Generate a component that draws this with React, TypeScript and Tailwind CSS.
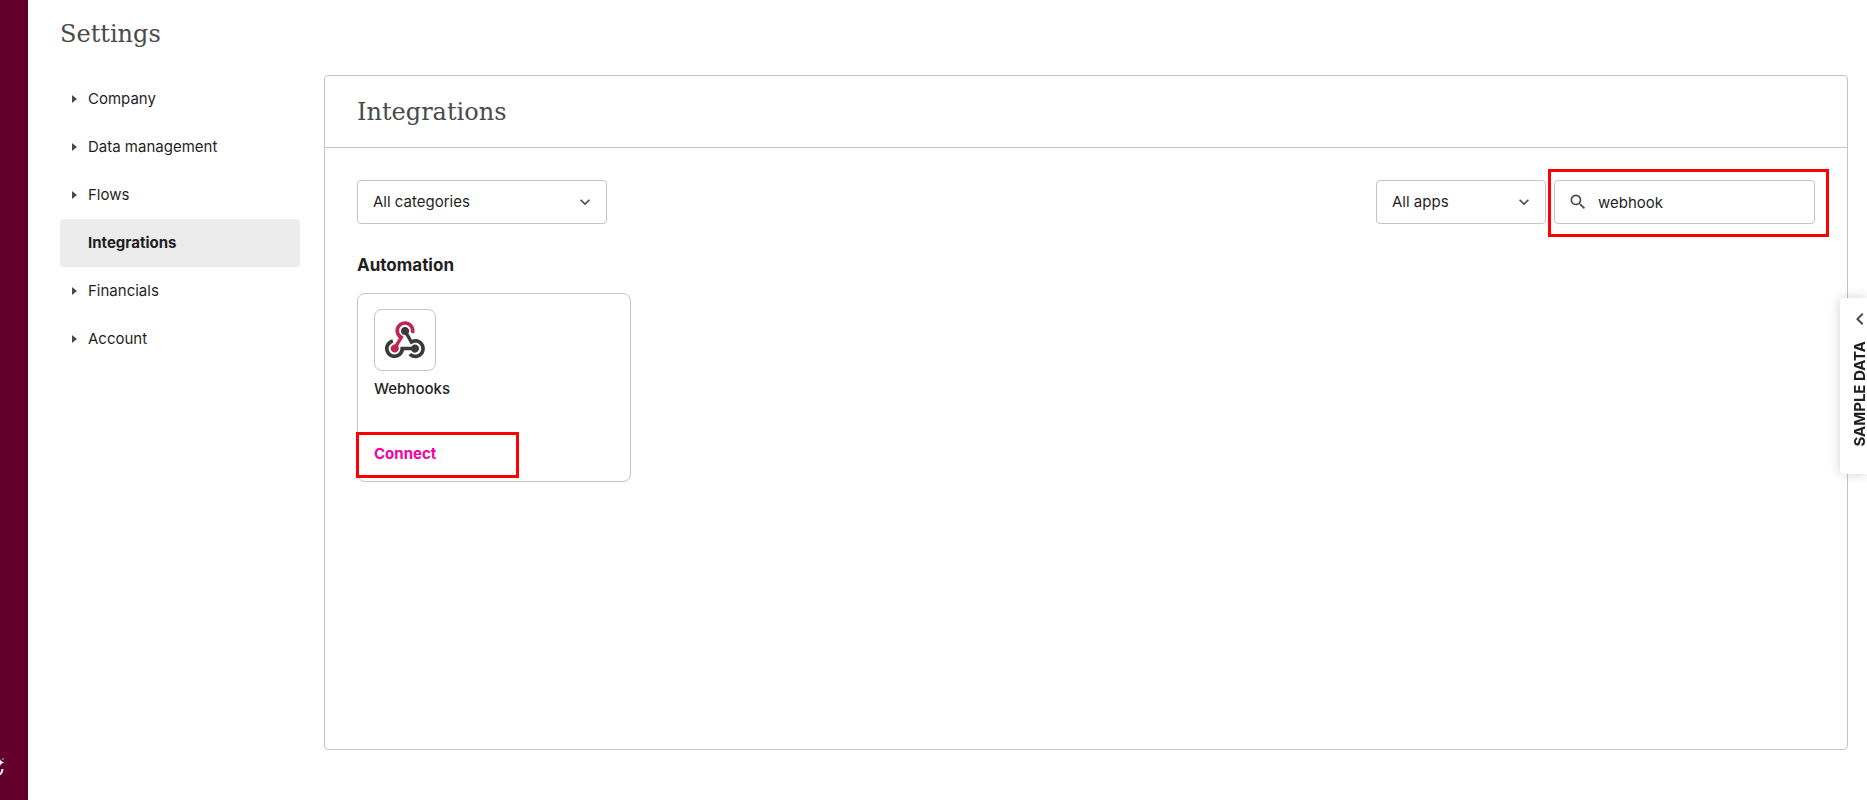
import { MdKeyboardArrowDown, MdKeyboardArrowLeft, MdSearch } from "react-icons/md";

type NavItem = {
  label: string;
  active?: boolean;
};

const navItems: NavItem[] = [
  { label: "Company" },
  { label: "Data management" },
  { label: "Flows" },
  { label: "Integrations", active: true },
  { label: "Financials" },
  { label: "Account" }
];

const headingClass = "font-['DejaVu_Serif',serif] text-2xl leading-8 text-[#4a4a4a]";
const fieldClass =
  "h-11 w-full appearance-none rounded border border-[#c4c4c4] bg-white text-[15px] text-[#1f1f1f] outline-none";

function WebhooksLogo() {
  return (
    <svg viewBox="0 0 256 239" className="w-10" aria-hidden="true">
      <path
        fill="#bd2853"
        d="M119.54 100.503c-10.61 17.836-20.775 35.108-31.152 52.25-2.665 4.401-3.984 7.986-1.855 13.58 5.878 15.454-2.414 30.493-17.998 34.575-14.697 3.851-29.016-5.808-31.932-21.543-2.584-13.927 8.224-27.58 23.58-29.757 1.286-.184 2.6-.205 4.762-.367l23.358-39.168C73.612 95.465 64.868 78.39 66.803 57.23c1.368-14.957 7.25-27.883 18-38.477 20.59-20.288 52.002-23.573 76.246-8.001 23.284 14.958 33.948 44.094 24.858 69.031-6.854-1.858-13.756-3.732-21.343-5.79 2.854-13.865.743-26.315-8.608-36.981-6.178-7.042-14.106-10.733-23.12-12.093-18.072-2.73-35.815 8.88-41.08 26.618-5.976 20.13 3.069 36.575 27.784 48.967z"
      />
      <path
        fill="#3a3a3a"
        d="M149.841 79.41c7.475 13.187 15.065 26.573 22.587 39.836 38.02-11.763 66.686 9.284 76.97 31.817 12.422 27.219 3.93 59.457-20.465 76.25-25.04 17.238-56.707 14.293-78.892-7.851 5.654-4.733 11.336-9.487 17.407-14.566 21.912 14.192 41.077 13.524 55.305-3.282 12.133-14.337 11.87-35.714-.615-49.75-14.408-16.197-33.707-16.691-57.035-1.143-9.677-17.168-19.522-34.199-28.893-51.491-3.16-5.828-6.648-9.21-13.77-10.443-11.893-2.062-19.571-12.275-20.032-23.717-.453-11.316 6.214-21.545 16.634-25.53 10.322-3.949 22.435-.762 29.378 8.014 5.674 7.17 7.477 15.24 4.491 24.083-.83 2.466-1.905 4.852-3.07 7.774z"
      />
      <path
        fill="#3a3a3a"
        d="M167.707 187.21h-45.77c-4.387 18.044-13.863 32.612-30.19 41.876-12.693 7.2-26.373 9.641-40.933 7.29-26.808-4.323-48.728-28.456-50.658-55.63-2.184-30.784 18.975-58.147 47.178-64.293 1.947 7.071 3.915 14.21 5.862 21.264-25.876 13.202-34.832 29.836-27.59 50.636 6.375 18.304 24.484 28.337 44.147 24.457 20.08-3.962 30.204-20.65 28.968-47.432 19.036 0 38.088-.197 57.126.097 7.434.117 13.173-.654 18.773-7.208 9.22-10.784 26.191-9.811 36.121.374 10.148 10.409 9.662 27.157-1.077 37.127-10.361 9.62-26.73 9.106-36.424-1.26-1.992-2.136-3.562-4.673-5.533-7.298z"
      />
    </svg>
  );
}

function SelectField({ label, option }: { label: string; option: string }) {
  return (
    <div className="relative">
      <select aria-label={label} className={`${fieldClass} pr-10 pl-[15px]`}>
        <option>{option}</option>
      </select>
      <MdKeyboardArrowDown className="pointer-events-none absolute right-3 top-3 size-5 text-[#4a4a4a]" />
    </div>
  );
}

function SettingsNav() {
  return (
    <nav aria-label="Settings" className="w-60 shrink-0 text-[15px] text-[#1f1f1f]">
      {navItems.map((item) => (
        <a
          key={item.label}
          href="#"
          aria-current={item.active ? "page" : undefined}
          className={`flex h-12 items-center rounded pl-3 ${item.active ? "bg-[#ececec] font-bold" : ""}`}
        >
          <span className="flex w-4 shrink-0">
            {!item.active && (
              <svg viewBox="0 0 5 8" className="h-2 w-[5px]" fill="#4a4a4a" aria-hidden="true">
                <path d="M0 0l5 4-5 4z" />
              </svg>
            )}
          </span>
          {item.label}
        </a>
      ))}
    </nav>
  );
}

function IntegrationCard() {
  return (
    <article className="relative mt-4 flex h-[189px] w-[274px] flex-col items-start rounded-lg border border-[#c4c4c4] px-4 pt-[15px]">
      <div className="flex size-[62px] items-center justify-center rounded-lg border border-[#c4c4c4]">
        <WebhooksLogo />
      </div>
      <h3 className="mt-2 text-[15px] leading-5 font-medium text-[#1f1f1f]">Webhooks</h3>
      <button type="button" className="mt-[45px] text-[15px] leading-5 font-bold text-[#f500a3]">
        Connect
      </button>
      <div className="pointer-events-none absolute top-[138px] -left-0.5 h-[46px] w-[163px] border-3 border-[#ff0000]" />
    </article>
  );
}

export default function App() {
  return (
    <div className="flex min-h-screen bg-white font-[Inter,sans-serif]">
      <aside className="flex w-7 shrink-0 flex-col justify-end bg-[#62002b] pb-6">
        <svg viewBox="0 0 4 18" className="h-[18px] w-1" aria-hidden="true">
          <path d="M0 1l1 2 3 1.500-3 1.500-1 2z" fill="#fff" />
          <path d="M2 1h2" stroke="#fff" strokeOpacity=".7" />
          <path d="M2.500 11c0 2-1 4-2.500 5.500" fill="none" stroke="#fff" strokeWidth="2" />
        </svg>
      </aside>

      <div className="flex min-w-0 flex-1 flex-col pt-[18px] pr-[19px] pb-[50px] pl-8">
        <h1 className={headingClass}>Settings</h1>
        <div className="mt-[25px] flex flex-1 gap-6">
          <SettingsNav />
          <main className="min-w-0 flex-1 rounded border border-[#c4c4c4]">
            <header className="flex h-[72px] items-center border-b border-[#c4c4c4] px-8">
              <h2 className={headingClass}>Integrations</h2>
            </header>
            <div className="px-8 pt-8">
              <div className="flex items-start justify-between">
                <div className="w-[250px]">
                  <SelectField label="Category" option="All categories" />
                </div>
                <div className="flex gap-2">
                  <div className="w-[170px]">
                    <SelectField label="Apps" option="All apps" />
                  </div>
                  <div className="relative w-[261px]">
                    <MdSearch className="pointer-events-none absolute top-3 left-[14px] size-5 text-[#4a4a4a]" />
                    <input
                      type="text"
                      aria-label="Search integrations"
                      defaultValue="webhook"
                      className={`${fieldClass} pl-[43px]`}
                    />
                    <div className="pointer-events-none absolute -top-[11px] -right-[14px] -bottom-[13px] -left-[6px] border-3 border-[#ff0000]" />
                  </div>
                </div>
              </div>
              <h3 className="mt-[29px] text-[17px] leading-6 font-bold text-[#1f1f1f]">Automation</h3>
              <IntegrationCard />
            </div>
          </main>
        </div>
      </div>

      <button
        type="button"
        className="fixed top-[298px] right-0 flex h-44 w-[27px] flex-col items-center rounded-l bg-white pt-[9px] pl-3 shadow-[0_0_12px_rgba(0,0,0,0.18)]"
      >
        <MdKeyboardArrowLeft className="size-6 shrink-0 text-[#4a4a4a]" />
        <span className="mt-[10px] rotate-180 text-[15px] leading-5 font-bold whitespace-nowrap text-[#1f1f1f] [writing-mode:vertical-rl]">
          SAMPLE DATA
        </span>
      </button>
    </div>
  );
}
